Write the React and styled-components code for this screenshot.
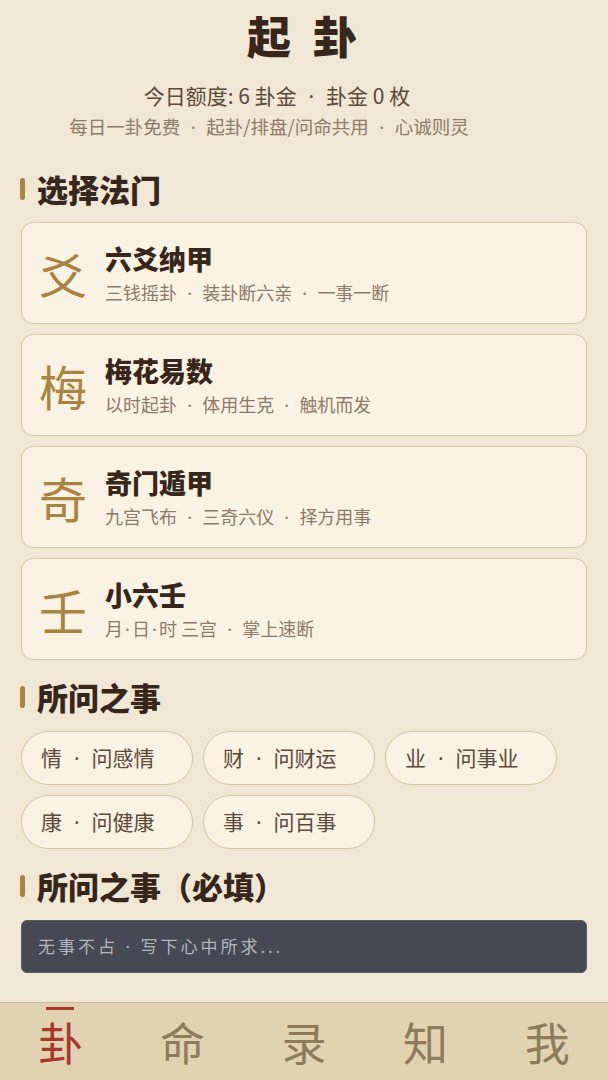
import React from 'react'
import styled, { createGlobalStyle } from 'styled-components'

const GlobalStyle = createGlobalStyle`
  html, body {
    margin: 0;
    padding: 0;
    background: #f0e7d4;
  }
  body {
    font-family: "Noto Sans CJK SC", "Noto Sans", sans-serif;
    color: #3a2a1c;
  }
  * { box-sizing: border-box; }
`

const methods = [
  { glyph: '爻', name: '六爻纳甲', desc: '三钱摇卦 · 装卦断六亲 · 一事一断' },
  { glyph: '梅', name: '梅花易数', desc: '以时起卦 · 体用生克 · 触机而发' },
  { glyph: '奇', name: '奇门遁甲', desc: '九宫飞布 · 三奇六仪 · 择方用事' },
  { glyph: '壬', name: '小六壬', desc: '月·日·时 三宫 · 掌上速断' },
]

const topics = ['情 · 问感情', '财 · 问财运', '业 · 问事业', '康 · 问健康', '事 · 问百事']

const tabs = ['卦', '命', '录', '知', '我']

const Page = styled.div`
  width: 608px;
  height: 1080px;
  display: flex;
  flex-direction: column;
  background: #f0e7d4;
  overflow: hidden;
`

const Content = styled.main`
  flex: 1;
  padding: 0 21px;
`

const Sep = styled.span`
  display: inline-block;
  width: ${(p) => (p.$tight ? '0.5em' : '1.4em')};
  text-align: center;
  font-family: "Noto Sans", sans-serif;
  line-height: 1;
`

// splits "a · b" and "a·b" so the middle dot keeps the narrow look of the original
const withDots = (text) =>
  text.split(/( · |·)/).map((part, i) => {
    if (part === ' · ') return <Sep key={i}>·</Sep>
    if (part === '·') return <Sep key={i} $tight>·</Sep>
    return part
  })

const Header = styled.header`
  display: flex;
  flex-direction: column;
  align-items: center;
  padding-top: 8px;
`

const Title = styled.h1`
  margin: 0 -18px 0 0;
  font-size: 44px;
  line-height: 54px;
  font-weight: 900;
  letter-spacing: 22px;
  color: #36271a;
`

const Quota = styled.div`
  margin: 19px 54px 0 0;
  font-size: 21px;
  line-height: 28px;
  color: #5c4a38;
`

const Note = styled.div`
  margin: 4px 70px 0 0;
  font-size: 18.5px;
  line-height: 26px;
  color: #8c7b66;
`

const SectionTitle = styled.h2`
  margin: ${(p) => p.$top}px 0 0 -1px;
  display: flex;
  align-items: center;
  gap: 12px;
  font-size: 31px;
  line-height: 40px;
  font-weight: 900;
  color: #36271a;
  &::before {
    content: '';
    width: 5px;
    height: 22px;
    border-radius: 3px;
    background: #a9843e;
  }
`

const CardList = styled.div`
  display: flex;
  flex-direction: column;
  gap: 10px;
  margin-top: 13px;
`

const Card = styled.div`
  height: 102px;
  display: flex;
  align-items: center;
  gap: 17px;
  padding: 0 0 0 16px;
  background: #faf3e4;
  border: 1.5px solid #d5c6a2;
  border-radius: 12px;
`

const Glyph = styled.span`
  width: 50px;
  text-align: center;
  font-size: 48px;
  line-height: 1;
  color: #a8843e;
`

const CardText = styled.div`
  display: flex;
  flex-direction: column;
`

const CardName = styled.div`
  font-size: 27px;
  line-height: 36px;
  font-weight: 900;
  color: #36271a;
`

const CardDesc = styled.div`
  margin-top: 2px;
  font-size: 18px;
  line-height: 26px;
  color: #8c7b66;
`

const PillGrid = styled.div`
  display: grid;
  grid-template-columns: repeat(3, 172px);
  column-gap: 10px;
  row-gap: 10px;
  margin-top: 14px;
`

const Pill = styled.button`
  height: 54px;
  padding: 0 0 0 19px;
  text-align: left;
  background: #faf3e4;
  border: 1.5px solid #d5c6a2;
  border-radius: 27px;
  font-family: inherit;
  font-size: 21px;
  line-height: 1;
  color: #5c4a38;
`

const Input = styled.input`
  display: block;
  width: 100%;
  height: 53px;
  margin-top: 14px;
  padding: 0 16px;
  background: #464853;
  border: 1px solid #5a5c66;
  border-radius: 6px;
  font-family: "Noto Sans", "Noto Sans CJK SC", sans-serif;
  font-size: 17px;
  letter-spacing: 3px;
  color: #e8e8ee;
  outline: none;
  &::placeholder {
    color: #b4b5bd;
  }
`

const TabBar = styled.nav`
  height: 78px;
  display: grid;
  grid-template-columns: repeat(5, 1fr);
  background: #e1d3b1;
  border-top: 1px solid #cdbb93;
`

const Tab = styled.div`
  position: relative;
  display: flex;
  justify-content: center;
  padding-top: 12px;
  font-size: 45px;
  line-height: 54px;
  color: ${(p) => (p.$active ? '#a6382b' : '#8d7b5c')};
  &::before {
    content: '';
    display: ${(p) => (p.$active ? 'block' : 'none')};
    position: absolute;
    top: 4px;
    left: 50%;
    width: 28px;
    height: 3px;
    margin-left: -15px;
    background: #a6382b;
  }
`

export default function App () {
  return (
    <Page>
      <GlobalStyle />
      <Content>
        <Header>
          <Title>起卦</Title>
          <Quota>{withDots('今日额度: 6 卦金 · 卦金 0 枚')}</Quota>
          <Note>{withDots('每日一卦免费 · 起卦/排盘/问命共用 · 心诚则灵')}</Note>
        </Header>

        <SectionTitle $top={30}>选择法门</SectionTitle>
        <CardList>
          {methods.map((m) => (
            <Card key={m.name}>
              <Glyph>{m.glyph}</Glyph>
              <CardText>
                <CardName>{m.name}</CardName>
                <CardDesc>{withDots(m.desc)}</CardDesc>
              </CardText>
            </Card>
          ))}
        </CardList>

        <SectionTitle $top={17}>所问之事</SectionTitle>
        <PillGrid>
          {topics.map((t) => (
            <Pill key={t}>{withDots(t)}</Pill>
          ))}
        </PillGrid>

        <SectionTitle $top={17}>所问之事（必填）</SectionTitle>
        <Input placeholder='无事不占 · 写下心中所求...' />
      </Content>

      <TabBar>
        {tabs.map((t, i) => (
          <Tab key={t} $active={i === 0}>{t}</Tab>
        ))}
      </TabBar>
    </Page>
  )
}
